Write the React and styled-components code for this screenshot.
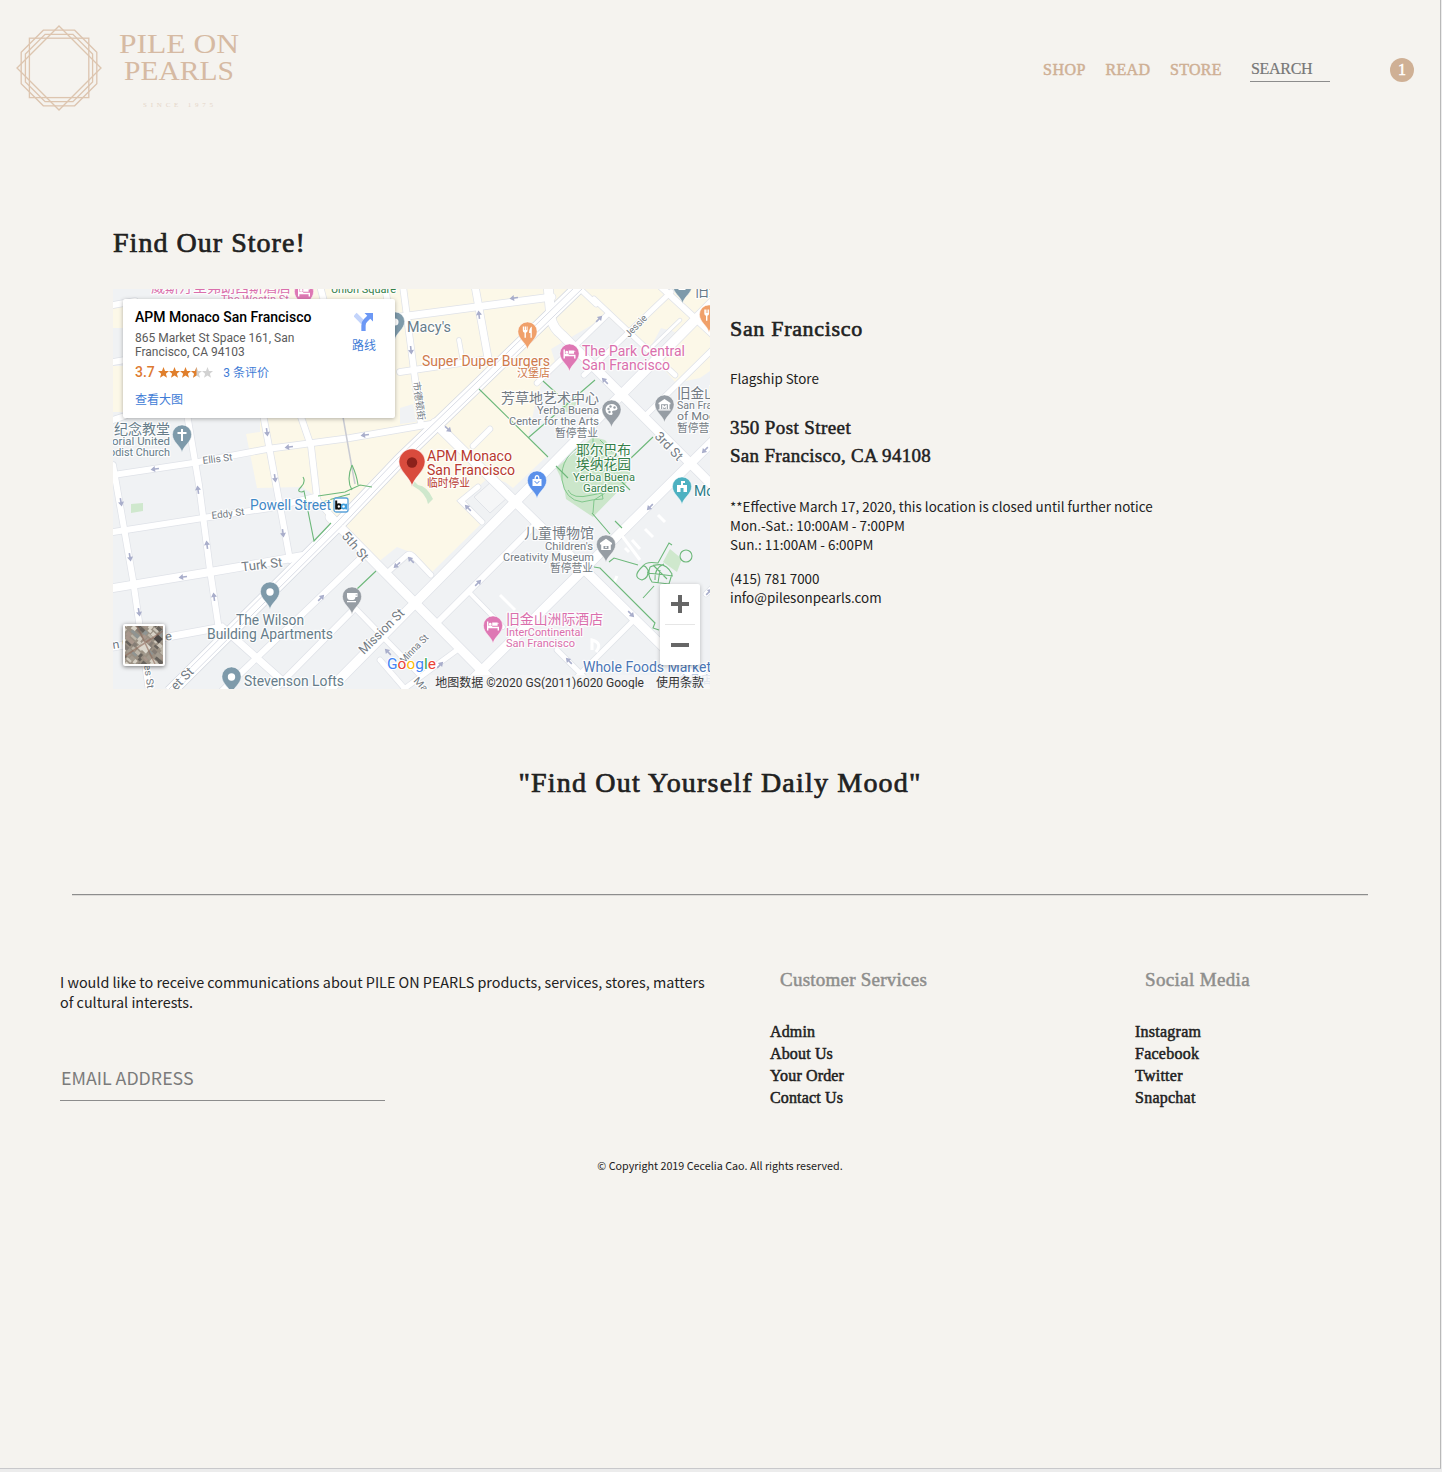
import React from "react";
import styled, { createGlobalStyle } from "styled-components";

const serif = '"Liberation Serif", "Noto Sans CJK SC", serif';
const sans = '"Noto Sans CJK SC", "Open Sans", sans-serif';
const roboto = 'Roboto, "Noto Sans CJK SC", sans-serif';

const GlobalStyle = createGlobalStyle`
  * { box-sizing: border-box; }
  body { margin: 0; background: #f5f3ef; }
  h1, h2, h3, p, ul { margin: 0; padding: 0; font-weight: 400; }
  ul { list-style: none; }
`;

const Page = styled.div`
  display: flex;
  flex-direction: column;
  width: 1442px;
  height: 1472px;
  overflow: hidden;
  background: #ececec;
`;
const Sheet = styled.div`
  width: 1441px;
  height: 1469px;
  background: #f5f3ef;
  border-right: 1px solid #b9b9b9;
  border-bottom: 1px solid #c8c8cb;
  color: #212121;
`;
const Header = styled.header`
  display: flex;
  align-items: center;
  justify-content: space-between;
  height: 140px;
  padding: 0 26px 0 10px;
`;
const LogoLink = styled.a`
  display: flex;
  padding-bottom: 4px;
`;
const Nav = styled.nav`
  display: flex;
  align-items: center;
  height: 28px;
`;
const SerifText = styled.span`
  font-family: ${serif};
  font-size: ${(p) => p.$size}px;
  line-height: ${(p) => p.$lh}px;
  letter-spacing: ${(p) => p.$ls || 0}px;
  color: ${(p) => p.$color || "#212121"};
  -webkit-text-stroke: ${(p) => p.$stroke ?? 0.5}px currentColor;
  white-space: nowrap;
`;
const NavLink = styled(SerifText).attrs({ as: "a", $size: 16, $lh: 20, $color: "#cfb095" })`
  width: ${(p) => p.$w}px;
`;
const Search = styled.div`
  width: 80px;
  height: 24px;
  margin: 0 60px 0 16px;
  padding: 1px 0 0 1px;
  border-bottom: 1px solid #8c8c8c;
`;
const Count = styled.div`
  display: flex;
  align-items: center;
  justify-content: center;
  width: 24px;
  height: 24px;
  border-radius: 50%;
  background: #cfb095;
`;
const StoreSection = styled.main`
  padding: 87px 113px 0;
`;
const StoreBody = styled.div`
  display: flex;
  gap: 20px;
  margin-top: 30px;
`;
const Title = styled(SerifText).attrs({ as: "h1" })`
  display: block;
`;
const Info = styled.section`
  display: flex;
  flex-direction: column;
  padding-top: 26px;
`;
const Body = styled.p`
  font-family: ${sans};
  font-size: ${(p) => p.$size}px;
  line-height: ${(p) => p.$lh}px;
  margin-top: ${(p) => p.$mt || 0}px;
  white-space: nowrap;
`;
const Address = styled.div`
  display: flex;
  flex-direction: column;
  margin: 26px 0 27px;
`;
const Slogan = styled(SerifText).attrs({ as: "h2" })`
  display: block;
  margin-top: 75px;
  text-align: center;
`;
const Rule = styled.hr`
  height: 2px;
  margin: 92px 72px 0;
  border: 0;
  border-top: 1px solid #8d8d8d;
  border-bottom: 1px solid #dddbd8;
`;
const Footer = styled.footer`
  display: grid;
  grid-template-columns: 710px 365px 1fr;
  padding: 73px 0 0 60px;
`;
const Email = styled.div`
  width: 325px;
  height: 45px;
  margin-top: 44px;
  padding-left: 1px;
  border-bottom: 1px solid #8c8c8c;
  font-family: ${sans};
  font-size: 17.8px;
  line-height: 43px;
  color: #7b7b7b;
`;
const LinkHead = styled(SerifText).attrs({ as: "h3", $size: 19, $lh: 22, $color: "#8e8e8c" })`
  padding: 0 0 30px 10px;
`;
const LinkItem = styled.li`
  height: 22px;
  line-height: 22px;
`;
const Copyright = styled.p`
  margin-top: 49px;
  font-family: ${sans};
  font-size: 10.75px;
  line-height: 16px;
  text-align: center;
`;

/* map */
const MapFrame = styled.div`
  position: relative;
  width: 597px;
  height: 400px;
  overflow: hidden;
  font-family: ${roboto};
`;
const Canvas = styled.svg`
  display: block;
  font-family: ${roboto};
`;
const PlaceCard = styled.div`
  position: absolute;
  left: 10px;
  top: 10px;
  display: flex;
  justify-content: space-between;
  width: 272px;
  height: 119px;
  padding: 9px 17px 0 12px;
  background: #fff;
  border-radius: 2px;
  box-shadow: 0 1px 4px rgba(0, 0, 0, 0.3);
`;
const PlaceName = styled.div`
  font-size: 14px;
  font-weight: 500;
  line-height: 19px;
  color: #000;
  white-space: nowrap;
`;
const PlaceAddress = styled.div`
  margin-top: 4px;
  font-size: 12px;
  line-height: 14px;
  color: #5b5b5b;
  white-space: nowrap;
`;
const Rating = styled.div`
  display: flex;
  align-items: center;
  height: 18px;
  margin-top: 4px;
  font-size: 14px;
  font-weight: 500;
  color: #dd7a32;
`;
const BlueText = styled.div`
  font-size: 12px;
  font-weight: 400;
  line-height: 18px;
  color: #3f7cd6;
  margin: ${(p) => p.$m || 0};
`;
const Directions = styled.div`
  display: flex;
  flex-direction: column;
  align-items: center;
  padding-top: 4px;
`;
const ZoomBox = styled.div`
  position: absolute;
  right: 10px;
  bottom: 24px;
  width: 40px;
  height: 81px;
  background: #fff;
  border-radius: 2px;
  box-shadow: 0 1px 4px rgba(0, 0, 0, 0.25);
`;
const Thumb = styled.div`
  position: absolute;
  left: 10px;
  top: 335px;
  width: 42px;
  height: 42px;
  padding: 2px;
  background: #fff;
  border-radius: 2px;
  box-shadow: 0 1px 4px rgba(0, 0, 0, 0.5);
`;
const Attribution = styled.div`
  position: absolute;
  right: 0;
  bottom: 0;
  display: flex;
  gap: 12px;
  height: 14px;
  padding: 0 6px 0 5px;
  background: rgba(245, 245, 245, 0.7);
  font-size: 12px;
  line-height: 16px;
  color: #333;
  white-space: nowrap;
`;

const octagon = (a) => {
  const h = a * 0.4142;
  return [[-h, -a], [h, -a], [a, -h], [a, h], [h, a], [-h, a], [-a, h], [-a, -h]]
    .map(([x, y]) => `${59 + x},${68 + y}`).join(" ");
};

const Logo = () => (
  <svg width="240" height="110" viewBox="10 13 240 110" fill="none">
    <g stroke="#d9bda5" strokeWidth="1.3" opacity="0.85">
      <rect x="29.4" y="38.2" width="59.4" height="59.4" />
      <polygon points="59,26 101,68 59,110 17,68" />
      <polygon points={octagon(37.8)} />
      <polygon points={octagon(33.6)} />
    </g>
    <g fill="#d6baa3" fontFamily='"Liberation Serif", serif'>
      <text x="119" y="52.5" fontSize="27" textLength="120" lengthAdjust="spacingAndGlyphs">PILE ON</text>
      <text x="124" y="80" fontSize="27" textLength="110" lengthAdjust="spacingAndGlyphs">PEARLS</text>
      <text x="143" y="106.5" fontSize="7" textLength="70" opacity="0.5">SINCE 1975</text>
    </g>
  </svg>
);

const MAJOR = [
  ["M330 517L502 691", 9], ["M435 423L706 689", 9],
  ["M548 285L551 318Q553 328 562 335L714 487", 9],
  ["M712 303L330 689", 9.5], ["M714 440L463 689", 9],
  ["M113 588L210 572L303 556", 8], ["M113 647L222 627L286 684", 7],
  ["M400 317L552 297", 7], ["M400 372L488 359", 6], ["M475 286L488 358", 7],
  ["M403 286L421 425", 6], ["M113 475L193 463L267 449L350 438L437 423", 6],
  ["M113 532L203 518L270 508L315 497", 6], ["M263 414L290 560", 6],
  ["M300 414L311 446L317 498", 6], ["M187 414L199 485L210 570L219 630", 6],
  ["M113 465L133 580L149 691", 6], ["M113 362L125 360M113 305L135 301M113 420L125 416", 6],
  ["M317 500L334 519", 6], ["M360 559L222 691", 6], ["M352 611L275 689", 6],
  ["M354 607L418 673", 5], ["M437 623L533 527", 6], ["M404 689L457 650", 5],
  ["M470 593L503 627", 4], ["M632 622L564 690", 5], ["M557 650L588 681", 5],
  ["M537 383L608 314", 5], ["M594 299L648 350L675 375", 5], ["M660 286L712 334", 6],
  ["M671 292L584 375", 5], ["M647 414L714 348", 5], ["M577 286L596 304", 5],
  ["M473 446L490 429", 5], ["M459 340L462 357", 4], ["M482 522L461 501L478 487", 5],
  ["M388 572L407 555Q410 553 413 556L431 575", 5], ["M688 689L714 660M706 594L714 586", 5],
  ["M320 286L325 305M385 286L388 305", 6], ["M652 347L680 320", 3],
  ["M380 660L405 689", 5],
];
const MARKET = "M170 692L340 523L400 460L480 383L580 286";
const GREEN = [
  "M479 389L548 457M543 381L565 401M595 380L528 438M556 466L568 478",
  "M614 474L630 490M653 437L631 458M592 513L610 534M615 521L622 528M609 562L614 558L638 565",
  "M594 567L600 568L655 623L653 628L659 630M303 477Q306 482 301 487T302 492L304 491L314 541L331 523M318 496L345 492L360 485L372 487M320 503L332 499L350 494M352 465Q346 480 352 490M352 465Q357 476 358 485",
  "M357 589L376 571M643 566Q646 561 658 563L669 543L672 545",
  "M643 566Q631 577 642 580Q649 578 648 570Q645 565 643 566M650 567Q665 560 672 574L669 584L652 582Q647 575 650 567M653 565L667 579M655 580Q654 568 664 564M658 583L660 570M647 573Q659 574 673 576M654 586L643 598M692 556A6 6 0 1 1 680 556A6 6 0 1 1 692 556",
];
const ARROWS = [
  [514, 298, 172], [479, 315, 262], [411, 350, 84], [599, 319, -45], [605, 381, 225], [448, 429, 42],
  [705, 450, 135], [267, 432, 82], [365, 435, 172], [289, 447, 172], [155, 469, 172], [275, 478, 82],
  [121, 502, 80], [198, 490, 262], [130, 557, 80], [207, 545, 262], [283, 533, 82], [183, 577, 172],
  [214, 597, 262], [139, 612, 80], [321, 598, -45], [397, 565, 140], [388, 652, 225], [468, 508, 225],
  [411, 560, 225], [478, 583, -45], [650, 507, 135], [631, 614, 45], [569, 661, 225], [440, 665, -45], [709, 592, -45],
];

const PinShape = ({ x, y, color, s = 1, children }) => (
  <g transform={`translate(${x} ${y}) scale(${s})`}>
    <path d="M0 17.5C-1.500 10.500-9.600 7-9.600-.5A9.600 9.600 0 0 1 9.600-.5C9.600 7 1.500 10.500 0 17.500Z" fill={color} stroke="#fff" strokeOpacity=".65" strokeWidth=".8" />
    <g fill="#fff">{children}</g>
  </g>
);
const Bed = () => <path fillRule="evenodd" d="M-6-4.500h1.400v4.300H4.600V-2.500H6v7H4.600V2.200h-9.200v2.300H-6zM-.8-3.600H4Q6-3.600 6-1.500V.8H-.8zM-2.800-3.200a1.400 1.400 0 1 0 .1 0z" />;
const Fork = () => <path d="M-4.700-5.500v4q0 2 1.700 2.200v5h1.400v-5Q.1.500.1-1.500v-4h-1v3.500h-.6v-3.500h-1v3.500h-.6v-3.500zM4.300-5.500Q1.500-4 1.600 1H3v4.700h1.300z" />;
const Museum = () => <path d="M-6-2 0-6 6-2v1.200H-6zM-5-1h1.600v5H-5zM3.400-1H5v5H3.400zM-6 4.200H6v1.300H-6zM-2.300 4V0h1L0 1.500 1.300 0h1v4H1.200V2L0 3.200-1.200 2V4z" />;
const House = () => <path fillRule="evenodd" d="M-6-2 0-6.200 6-2v1.400H-6zM-4.800-.6H4.800V5H-4.800zM-2.500 1V4H2.500V1zM-.8 1.500H.8V3H-.8z" />;

const Label = ({ x, y, w, size = 11, color = "#737b83", anchor = "start", rot, children }) => (
  <text
    x={x} y={y} fontSize={size} fill={color} textAnchor={anchor}
    textLength={w} lengthAdjust="spacingAndGlyphs"
    stroke="#fff" strokeWidth="2.4" strokeOpacity=".85" strokeLinejoin="round" paintOrder="stroke"
    transform={rot ? `rotate(${rot} ${x} ${y})` : undefined}
  >{children}</text>
);

const LABELS = [
  { x: 151, y: 291.5, w: 140, size: 13, color: "#da6fac", t: "威斯汀圣弗朗西斯酒店" },
  { x: 221, y: 303, w: 68, size: 11, color: "#da6fac", t: "The Westin St" },
  { x: 331, y: 293, w: 65, size: 10.5, color: "#35804a", t: "Union Square" },
  { x: 407, y: 331.5, w: 44, size: 14, color: "#667c89", t: "Macy's" },
  { x: 422, y: 365.5, w: 128, size: 14, color: "#cf7a4b", t: "Super Duper Burgers" },
  { x: 517, y: 377, w: 33, size: 11, color: "#cf7a4b", t: "汉堡店" },
  { x: 582, y: 356, w: 103, size: 14, color: "#da6fac", t: "The Park Central" },
  { x: 582, y: 370, w: 88, size: 14, color: "#da6fac", t: "San Francisco" },
  { x: 501, y: 402.5, w: 98, size: 13.5, t: "芳草地艺术中心" },
  { x: 537, y: 414, w: 62, t: "Yerba Buena" },
  { x: 509, y: 425, w: 90, t: "Center for the Arts" },
  { x: 555, y: 436.5, w: 43, size: 11, t: "暂停营业" },
  { x: 677, y: 398, w: 54, size: 13.5, t: "旧金山现" },
  { x: 677, y: 409, w: 66, t: "San Francisco" },
  { x: 677, y: 420, w: 76, t: "of Modern Art" },
  { x: 677, y: 431.5, w: 43, t: "暂停营业" },
  { x: 695, y: 296, w: 28, size: 13.5, color: "#667c89", t: "旧金" },
  { x: 576, y: 455, w: 55, size: 13.5, color: "#35804a", t: "耶尔巴布" },
  { x: 576, y: 469, w: 55, size: 13.5, color: "#35804a", t: "埃纳花园" },
  { x: 573, y: 481, w: 62, color: "#35804a", t: "Yerba Buena" },
  { x: 583, y: 492, w: 42, color: "#35804a", t: "Gardens" },
  { x: 427, y: 461, w: 85, size: 14, color: "#b8392e", t: "APM Monaco" },
  { x: 427, y: 475, w: 88, size: 14, color: "#b8392e", t: "San Francisco" },
  { x: 427, y: 486.5, w: 43, color: "#b8392e", t: "临时停业" },
  { x: 114, y: 433.5, w: 56, size: 13.5, color: "#667c89", t: "纪念教堂" },
  { x: 170, y: 445, w: 68, anchor: "end", color: "#667c89", t: "morial United" },
  { x: 170, y: 456, w: 61, anchor: "end", color: "#667c89", t: "odist Church" },
  { x: 203, y: 464, w: 30, size: 10, rot: -7, t: "Ellis St" },
  { x: 212, y: 519, w: 33, size: 10, rot: -7, t: "Eddy St" },
  { x: 242, y: 571.5, w: 41, size: 13, rot: -7, t: "Turk St" },
  { x: 250, y: 510, w: 81, size: 14, color: "#3f88c6", t: "Powell Street" },
  { x: 341, y: 536, w: 34, size: 13, rot: 50, t: "5th St" },
  { x: 654, y: 437, w: 34, size: 13, rot: 46, t: "3rd St" },
  { x: 364, y: 655, w: 58, size: 13, rot: -45, t: "Mission St" },
  { x: 404, y: 664, w: 36, size: 10, rot: -46, t: "Minna St" },
  { x: 413, y: 681, w: 38, size: 10, rot: 47, t: "Mary St" },
  { x: 629, y: 338, w: 27, size: 10, rot: -46, t: "Jessie" },
  { x: 176, y: 691, w: 26, size: 13, rot: -45, t: "et St" },
  { x: 144, y: 665, w: 24, size: 10, rot: 82, t: "es St" },
  { x: 113, y: 649, w: 60, size: 12, rot: -9, t: "n Gate Ave" },
  { x: 413, y: 382, w: 39, size: 9.5, rot: 82, t: "市德顿街" },
  { x: 236, y: 625, w: 68, size: 14, color: "#667c89", t: "The Wilson" },
  { x: 207, y: 639, w: 126, size: 14, color: "#667c89", t: "Building Apartments" },
  { x: 244, y: 686, w: 100, size: 14, color: "#667c89", t: "Stevenson Lofts" },
  { x: 524, y: 538, w: 70, size: 13.5, t: "儿童博物馆" },
  { x: 545, y: 549.5, w: 48, t: "Children's" },
  { x: 503, y: 560.5, w: 91, t: "Creativity Museum" },
  { x: 550, y: 571.5, w: 43, t: "暂停营业" },
  { x: 506, y: 624, w: 97, size: 13.5, color: "#da6fac", t: "旧金山洲际酒店" },
  { x: 506, y: 635.5, w: 77, color: "#da6fac", t: "InterContinental" },
  { x: 506, y: 646.5, w: 69, color: "#da6fac", t: "San Francisco" },
  { x: 583, y: 671.5, w: 128, size: 14, color: "#4a76b5", t: "Whole Foods Market" },
  { x: 678, y: 684, w: 34, size: 11, color: "#a9bddb", t: "食品店" },
  { x: 694, y: 496, w: 58, size: 14, color: "#2b7c89", t: "Moscone" },
];

const StreetMap = () => (
  <Canvas width="597" height="400" viewBox="113 289 597 400">
    <rect x="113" y="289" width="597" height="400" fill="#f0f2f4" />
    <g fill="#fcf8e8">
      <path d="M240 289H577L331 530L317 497L302 487L257 488L246 434L260 432V410L240 410Z" />
      <path d="M113 305H126V328H113ZM113 366H126V412H113Z" />
      <path d="M577 289H710V371L700 378L676 383L654 358L665 345L675 332L661 328L648 352L607 316L551 349L556 365L543 379L536 400L528 438L547 456L513 488L505 482L488 478L463 500L483 522L430 574L410 552L397 547L377 563L340 526Z" />
    </g>
    <path fill="#f0f2f4" d="M400 408L413 404L416 422L400 424ZM113 328H125V362H113Z" />
    <path fill="#f5f6f7" stroke="#e0e3e8" d="M474 497L491 482L507 498L490 513Z" />
    <path fill="#cfe8cd" d="M131 504L143 503V511L131 513ZM413 480L418 485Q427 486 433 499L428 504Q426 493 413 486ZM670 549L682 559L677 572L663 562ZM562 402H577L572 412H562Z" />
    <path fill="#cbe6ca" d="M556 468L593 437L605 440L630 470V479L593 517L566 499Q564 482 556 468Z" />
    <path fill="none" stroke="#82c78c" strokeWidth="1" d="M584 444Q560 456 562 480Q565 500 582 502Q594 499 603 499L602 493L592 495Q572 500 568 490M593 513L594 500L616 486M593 437V444M600 440L612 452" />
    {MAJOR.map(([d, w], i) => <path key={`c${i}`} d={d} fill="none" stroke="#dfe2e8" strokeWidth={w + 1.4} strokeLinecap="round" />)}
    <path d={MARKET} fill="none" stroke="#d4d8e0" strokeWidth="13.5" />
    {MAJOR.map(([d, w], i) => <path key={`r${i}`} d={d} fill="none" stroke="#fff" strokeWidth={w} strokeLinecap="round" />)}
    <path d={MARKET} fill="none" stroke="#fff" strokeWidth="12" />
    <path d="M168 690L338 521L398 458L478 381L576 286M172.500 694L342.500 525L402.500 462L482.500 385L583 288" fill="none" stroke="#dadde6" strokeWidth="1" />
    <path d="M343 417L352 468L355 484" stroke="#c9cbd3" strokeWidth="1.5" fill="none" />
    <path d="M625 548L629 552M632 540L640 549M645 529L653 537M658 515L665 522M500 595L515 610M592 650V640Q603 643 596 652M620 533L640 560M617 576L614 583" stroke="#fff" strokeWidth="3" fill="none" />
    {GREEN.map((d) => <path key={d} d={d} fill="none" stroke="#6db87a" strokeWidth="1.1" />)}
    {ARROWS.map(([x, y, r]) => (
      <path key={`${x}-${y}`} transform={`translate(${x} ${y}) rotate(${r})`} d="M-4-.8H0V-3L4.500 0 0 3V.8H-4Z" fill="#a9aecb" />
    ))}
    {LABELS.map(({ t, ...p }) => <Label key={t + p.x + p.y} {...p}>{t}</Label>)}

    <PinShape x={304} y={292} color="#de78b4"><Bed /></PinShape>
    <PinShape x={395} y={322} color="#7e9aaa"><circle r="3.5" /></PinShape>
    <PinShape x={527.5} y={332} color="#f0a06a"><Fork /></PinShape>
    <PinShape x={569.5} y={354} color="#de78b4"><Bed /></PinShape>
    <PinShape x={682.5} y={286} color="#7e9aaa"><path d="M-4-3h7v7h-7z" /></PinShape>
    <PinShape x={709} y={315} color="#f0a06a"><Fork /></PinShape>
    <PinShape x={611.5} y={410} color="#969da4">
      <path d="M0-6a6 5.500 0 1 0 0 11q2-1 .5-3 0-2 3-1.500Q6 0 6-1.500Q5-6 0-6Z" />
      <g fill="#969da4"><circle cx="-3" cy="-1" r="1.2" /><circle cx="-1" cy="-3.5" r="1.2" /><circle cx="3" cy="-2.5" r="1.2" /><circle cx="-2" cy="2" r="1.2" /></g>
    </PinShape>
    <PinShape x={664.5} y={405} color="#969da4"><Museum /></PinShape>
    <PinShape x={606} y={545} color="#969da4"><House /></PinShape>
    <PinShape x={182} y={435} color="#7e9aaa"><path d="M-1-6H1V-3H4.500V-1H1V6H-1V-1H-4.500V-3H-1Z" /></PinShape>
    <PinShape x={270} y={592} color="#7e9aaa"><circle r="3.7" /></PinShape>
    <PinShape x={231.5} y={677} color="#7e9aaa"><circle r="3.7" /></PinShape>
    <PinShape x={352} y={597} color="#969da4"><path fillRule="evenodd" d="M-5-4H5.500V0H3.500Q3 3 1 3H-2Q-4.500 3-5 0ZM-5 4H4V5.200H-5ZM3.800-2.800V-1.200H4.500V-2.800Z" /></PinShape>
    <PinShape x={537} y={481} color="#5a90ea">
      <path d="M-4.500-2H4.500V5H-4.500ZM-2.500-2Q-2.500-6 0-6T2.500-2H1.300Q1.300-4.800 0-4.800T-1.300-2Z" />
      <path d="M-2.300 0Q0 4.500 2.300 0" fill="none" stroke="#5a90ea" />
    </PinShape>
    <PinShape x={682} y={487} color="#4db1c1"><path d="M-5-2H-1V-6H3V-4H1V-2H5V5H-5Z" /><path d="M-1.500 1H1.500V5H-1.500Z" fill="#4db1c1" /></PinShape>
    <PinShape x={493} y={626} color="#de78b4"><Bed /></PinShape>
    <PinShape x={412} y={462.5} s={1.37} color="#d94b3d"><circle r="3.8" fill="#8c211b" /></PinShape>

    <g transform="translate(334 498)">
      <rect width="14" height="14" rx="2" fill="#fff" stroke="#5ba3da" strokeWidth="1.3" />
      <g fill="none" strokeWidth="2">
        <path d="M2.200 2.500V11.500" stroke="#111" />
        <circle cx="4.800" cy="8.500" r="2.200" stroke="#111" />
        <circle cx="9.600" cy="8.500" r="2.100" stroke="#3f9fdc" strokeWidth="1.6" />
        <path d="M12.200 5.700V11.500" stroke="#3f9fdc" strokeWidth="1.6" />
      </g>
    </g>
    <text x="387" y="668.5" fontSize="15" textLength="49" lengthAdjust="spacingAndGlyphs" stroke="#fff" strokeWidth="2" paintOrder="stroke">
      <tspan fill="#4285f4">G</tspan><tspan fill="#ea4335">o</tspan><tspan fill="#fbbc05">o</tspan><tspan fill="#4285f4">g</tspan><tspan fill="#34a853">l</tspan><tspan fill="#ea4335">e</tspan>
    </text>
  </Canvas>
);

const starPath = "M5.500 0 7 3.900 11 4.100 7.900 6.700 9 10.700 5.500 8.400 2 10.700 3.100 6.700 0 4.100 4 3.900Z";
const Stars = () => (
  <svg width="56" height="11" viewBox="0 0 56 11">
    {[0, 1, 2, 3, 4].map((i) => (
      <path key={i} d={starPath} transform={`translate(${i * 11})`} fill={i > 2 ? "#d2d2d2" : "#e07f2c"} />
    ))}
    <path d="M5.500 0V8.400L2 10.700 3.100 6.700 0 4.100 4 3.900Z" transform="translate(33)" fill="#e07f2c" />
  </svg>
);

const TILE = ["#a39b8f", "#bdb6a9", "#857d75", "#cdc7bb", "#a8978c", "#8f9492", "#d8d2c6", "#67625c"];
const Satellite = () => (
  <svg width="38" height="38" viewBox="0 0 38 38">
    <rect width="38" height="38" fill="#9a9083" />
    <g transform="rotate(42 19 19)">
      {Array.from({ length: 150 }, (_, i) => (
        <rect key={i} x={-9 + (i % 10) * 6 + ((i * 3) % 4)} y={-9 + Math.floor(i / 10) * 4}
          width={3 + ((i * 7) % 5) * 0.9} height={2.4 + ((i * 5) % 4) * 0.7} fill={TILE[(i * i * 7 + i * 3 + (i >> 3)) % 8]} />
      ))}
      <rect x="16" y="16" width="10" height="8" fill="#dcd8ce" />
      <rect x="22" y="2" width="7" height="6" fill="#4d4946" />
    </g>
    <path d="M0 30 38 5M12 0 30 38" stroke="#8d6a5b" strokeWidth="1.5" opacity=".6" />
  </svg>
);

const StoreMap = () => (
  <MapFrame>
    <StreetMap />
    <PlaceCard>
      <div>
        <PlaceName>APM Monaco San Francisco</PlaceName>
        <PlaceAddress>865 Market St Space 161, San<br />Francisco, CA 94103</PlaceAddress>
        <Rating>3.7&nbsp;<Stars /><BlueText $m="1px 0 0 9px">3 条评价</BlueText></Rating>
        <BlueText $m="10px 0 0">查看大图</BlueText>
      </div>
      <Directions>
        <svg width="20" height="20" viewBox="0 0 20 20">
          <path d="M1 2.500 9 10.500" stroke="#c3d4fb" strokeWidth="4.6" />
          <path d="M9.500 19V13.500Q9.500 10.500 11.500 8.500L15.500 4.500" fill="none" stroke="#6c98f5" strokeWidth="4.3" />
          <path d="M10.500 1H19V9.500Z" fill="#6c98f5" />
        </svg>
        <BlueText $m="5px 2px 0">路线</BlueText>
      </Directions>
    </PlaceCard>
    <Thumb><Satellite /></Thumb>
    <ZoomBox>
      <svg width="40" height="81" viewBox="0 0 40 81">
        <path d="M11 20H29M20 11V29M11 61H29" stroke="#666" strokeWidth="4" />
        <path d="M5 40.500H35" stroke="#e6e6e6" />
      </svg>
    </ZoomBox>
    <Attribution><span>地图数据 ©2020 GS(2011)6020 Google</span><span>使用条款</span></Attribution>
  </MapFrame>
);

const COLUMNS = [
  { head: "Customer Services", ls: 0.24, itemLs: 0.15, items: ["Admin", "About Us", "Your Order", "Contact Us"] },
  { head: "Social Media", ls: 0.35, itemLs: 0.25, items: ["Instagram", "Facebook", "Twitter", "Snapchat"] },
];

export default function App() {
  return (
    <Page>
      <GlobalStyle />
      <Sheet>
        <Header>
          <LogoLink><Logo /></LogoLink>
          <Nav>
            <NavLink $w={62.5} $ls={0.5}>SHOP</NavLink>
            <NavLink $w={64.5} $ls={0.3}>READ</NavLink>
            <NavLink $w={64} $ls={0.3}>STORE</NavLink>
            <Search><SerifText $size={16} $lh={20} $ls={-0.3} $stroke={0.2} $color="#777">SEARCH</SerifText></Search>
            <Count><SerifText $size={16} $lh={24} $color="#fff">1</SerifText></Count>
          </Nav>
        </Header>
        <StoreSection>
          <Title $size={28} $lh={32} $ls={1.03} $stroke={0.7}>Find Our Store!</Title>
          <StoreBody>
            <StoreMap />
            <Info>
              <SerifText as="h2" $size={22} $lh={28} $ls={0.68} $stroke={0.6}>San Francisco</SerifText>
              <Body $size={13.42} $lh={19} $mt={26}>Flagship Store</Body>
              <Address>
                <SerifText $size={19} $lh={28} $ls={0.4}>350 Post Street</SerifText>
                <SerifText $size={19} $lh={28} $ls={0.3}>San Francisco, CA 94108</SerifText>
              </Address>
              <Body $size={13.42} $lh={19}>
                **Effective March 17, 2020, this location is closed until further notice<br />
                Mon.-Sat.: 10:00AM - 7:00PM<br />
                Sun.: 11:00AM - 6:00PM
              </Body>
              <Body $size={13.42} $lh={19} $mt={15}>(415) 781 7000<br />info@pilesonpearls.com</Body>
            </Info>
          </StoreBody>
        </StoreSection>
        <Slogan $size={28} $lh={38} $ls={1.19} $stroke={0.7}>"Find Out Yourself Daily Mood"</Slogan>
        <Rule />
        <Footer>
          <div>
            <Body $size={14.36} $lh={20} $mt={3}>
              I would like to receive communications about PILE ON PEARLS products, services, stores, matters<br />
              of cultural interests.
            </Body>
            <Email>EMAIL ADDRESS</Email>
          </div>
          {COLUMNS.map((c) => (
            <div key={c.head}>
              <LinkHead $ls={c.ls}>{c.head}</LinkHead>
              <ul>
                {c.items.map((t) => <LinkItem key={t}><SerifText $size={16} $lh={22} $ls={c.itemLs}>{t}</SerifText></LinkItem>)}
              </ul>
            </div>
          ))}
        </Footer>
        <Copyright>© Copyright 2019 Cecelia Cao. All rights reserved.</Copyright>
      </Sheet>
    </Page>
  );
}
